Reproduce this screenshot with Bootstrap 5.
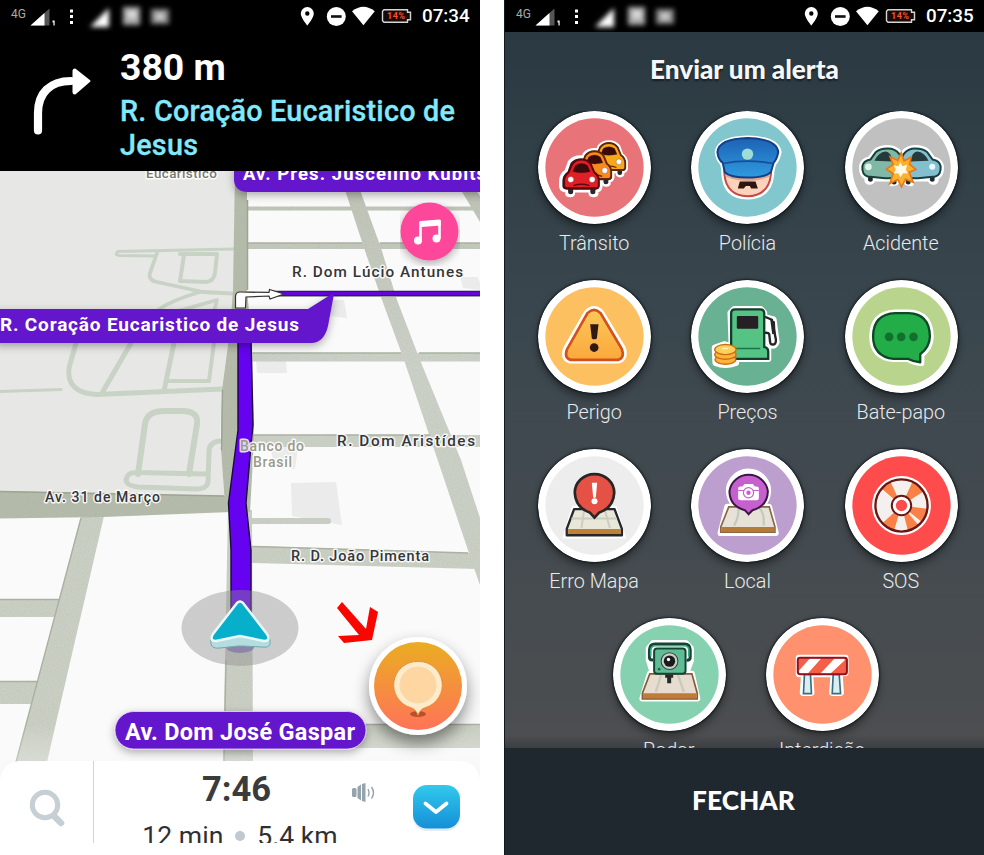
<!DOCTYPE html>
<html lang="pt-BR">
<head>
<meta charset="utf-8">
<meta name="viewport" content="width=device-width, initial-scale=1">
<title>Enviar um alerta</title>
<link href="https://cdn.jsdelivr.net/npm/bootstrap@5.3.0/dist/css/bootstrap.min.css" rel="stylesheet">
<style>
  body { font-family: Roboto, "Liberation Sans", sans-serif; background: #fff; }
  svg { display: block; }
  svg text { font-family: Roboto, "Liberation Sans", sans-serif; }
  .stage { width: 984px; height: 855px; gap: 24px; }
  .phone { width: 480px; }
  .phone-nav { height: 843px; }
  .statusbar { height: 32px; background: #000; }
  .clock { font-size: 18.8px; font-weight: 500; line-height: 33px; width: 58px; }
  .turn { height: 139px; background: #000; }
  .turn-icon { width: 120px; padding: 36px 0 0 33px; }
  .turn-distance { font-size: 37.3px; font-weight: 700; line-height: 40px; padding-top: 15px; }
  .turn-street { font-size: 28.8px; font-weight: 500; line-height: 34px; letter-spacing: .22px; color: #82e9fd; padding-top: 7px; -webkit-text-stroke: .3px #82e9fd; }
  .map { height: 611px; }
  .fab-music { left: 400px; top: 31px; }
  .fab-report { left: 360px; top: 457px; overflow: visible; }
  .eta { height: 82px; background: #fff; border-radius: 20px 20px 0 0; margin-top: -21px; }
  .eta-search { width: 94px; border-right: 1px solid #cdd5d9; padding: 27px 0 0 28px; }
  .eta-info { width: 285px; color: #3b3b3b; }
  .eta-time { font-size: 34.5px; font-weight: 700; line-height: 38px; padding-top: 9px; }
  .eta-left { font-size: 26.6px; line-height: 32px; padding: 12px 0 0 7px; gap: 12px; color: #303030; }
  .eta-dot { width: 10px; height: 10px; background: #c0c9cd; }
  .eta-sound { left: 351px; top: 20px; }
  .phone-alert { background: linear-gradient(#2a3840 0, #2c3b43 60px, #3b474e 330px, #474c50 620px, #4c4e50 735px, #3c3f42 748px); border-left: 1px solid #111a20; }
  .alert-title { height: 79px; font-family: "Lato", sans-serif; font-weight: 900; font-size: 26.1px; line-height: 74px; color: #f6f7f8; text-shadow: 0 2px 2px rgba(0,0,0,.5); }
  .alert-rows { height: 637px; padding-left: 13px; padding-right: 6px; }
  .alert-row { height: 169px; }
  .alert-row-last { padding-right: 4px; }
  .alert-item { width: 153.4px; color: #e8eaeb; font-size: 19.8px; font-weight: 300; }
  .alert-item svg { width: 113px; height: 113px; border-radius: 50%; box-shadow: 0 5px 9px rgba(0,0,0,.42), 0 0 2px 1px rgba(10,20,26,.7); }
  .alert-item span { line-height: 24px; padding-top: 8px; margin-left: -1px; }
  .close-btn { height: 107px; background: #20282f; font-family: "Lato", sans-serif; font-weight: 900; font-size: 26.3px; color: #fff; line-height: 105px; padding-right: 2px; z-index: 1; }
</style>
<script src="https://cdn.jsdelivr.net/npm/bootstrap@5.3.0/dist/js/bootstrap.bundle.min.js"></script>
</head>
<body class="m-0 overflow-hidden">

<svg width="0" height="0" class="position-absolute">
  <defs>
    <filter id="soft" x="-30%" y="-30%" width="160%" height="160%"><feGaussianBlur stdDeviation="2.500"/></filter>
    <linearGradient id="capBlue" x1="0" y1="0" x2="0" y2="1"><stop offset="0" stop-color="#1d62b4"/><stop offset="1" stop-color="#2f9be0"/></linearGradient>
    <linearGradient id="warn" x1="0" y1="0" x2="0" y2="1"><stop offset="0" stop-color="#fbc75a"/><stop offset="1" stop-color="#fba93c"/></linearGradient>
    <symbol id="status-left" viewBox="0 0 200 32">
      <text x="11" y="17.500" font-size="12" fill="#aaa" textLength="15">4G</text>
      <path d="M30.500 25.500 49.500 8.500V25.500z" fill="#555"/>
      <path d="M30.500 25.500 44.500 13V25.500z" fill="#fff"/>
      <path d="M52.500 20.500h2.200v5h-1.300v-3h-.9z" fill="#eee"/>
      <g fill="#fff"><rect x="70" y="9.500" width="3" height="3"/><rect x="70" y="15" width="3" height="3"/><rect x="70" y="21" width="3" height="3"/></g>
      <g filter="url(#soft)" fill="#ddd"><path d="M90 27 109 8v19z" fill="#fff"/><rect x="123" y="7" width="17" height="18" fill="#aaa"/><rect x="151" y="9" width="18" height="15" fill="#888"/><rect x="128" y="11" width="8" height="7" fill="#ddd"/><rect x="156" y="13" width="8" height="7" fill="#ccc"/></g>
    </symbol>
    <symbol id="status-right" viewBox="0 0 114 32">
      <path d="M7.300 7a6.500 6.500 0 0 0-6.500 6.500c0 4.400 6.500 12 6.500 12s6.500-7.600 6.500-12A6.500 6.500 0 0 0 7.300 7zm0 4.300a2.200 2.200 0 1 1 0 4.400 2.200 2.200 0 0 1 0-4.400z" fill="#fff" fill-rule="evenodd"/>
      <circle cx="36.300" cy="16.500" r="9.500" fill="#fff"/><rect x="31" y="15.200" width="10.600" height="2.600" fill="#111"/>
      <path d="M52 11.200Q63.400 2.200 74.800 11.200L63.400 25.300z" fill="#fff"/>
      <path d="M84 9.700h23.500v2.600h3v7.400h-3v2.600H84l-1.500-1.500v-9.600z" fill="#150c0a" stroke="#d5d5d5" stroke-width="1.400"/>
      <text x="87" y="19.300" font-size="9" font-weight="700" fill="#ff4f2c" textLength="18">14%</text>
    </symbol>
  </defs>
</svg>

<main class="stage d-flex">
  <section class="phone phone-nav d-flex flex-column overflow-hidden">
    <div class="statusbar d-flex justify-content-between text-white flex-shrink-0">
      <svg width="200" height="32"><use href="#status-left"/></svg>
      <div class="d-flex"><svg width="114" height="32" class="me-2"><use href="#status-right"/></svg><div class="clock">07:34</div></div>
    </div>
    <div class="turn d-flex text-white flex-shrink-0">
      <div class="turn-icon">
        <svg width="60" height="70" viewBox="0 0 60 70"><path d="M5 62.500V45C5 25 17 13 38 13" fill="none" stroke="#fff" stroke-width="8.200" stroke-linecap="round"/><path d="M42 1.500 56.500 13 42 25.500q-1.500 0-1.500-1.500V3q0-1.500 1.500-1.500z" fill="#fff" stroke="#fff" stroke-width="2" stroke-linejoin="round"/></svg>
      </div>
      <div>
        <div class="turn-distance">380 m</div>
        <div class="turn-street">R. Coração Eucaristico de<br>Jesus</div>
      </div>
    </div>

    <div class="map position-relative flex-shrink-0">
      <svg width="480" height="611" viewBox="0 171 480 611">
        <defs>
          <linearGradient id="road" x1="0" y1="171" x2="0" y2="560" gradientUnits="userSpaceOnUse"><stop offset="0" stop-color="#bec2b5"/><stop offset=".5" stop-color="#cbd1c8"/><stop offset="1" stop-color="#cacfc4"/></linearGradient>
          <linearGradient id="fade" x1="0" y1="0" x2="0" y2="1"><stop offset="0" stop-color="#fff" stop-opacity="0"/><stop offset="1" stop-color="#f2f2f2"/></linearGradient>
          <filter id="lift" x="-10%" y="-40%" width="120%" height="190%"><feDropShadow dx="0" dy="3" stdDeviation="4" flood-opacity=".32"/></filter>
          <filter id="grain" x="0" y="0" width="100%" height="100%"><feTurbulence type="fractalNoise" baseFrequency=".7" numOctaves="2" result="n"/><feColorMatrix in="n" type="matrix" values="0 0 0 0 .35  0 0 0 0 .38  0 0 0 0 .3  .45 0 0 0 -.18" result="m"/><feComposite in="m" in2="SourceGraphic" operator="in" result="g"/><feMerge><feMergeNode in="SourceGraphic"/><feMergeNode in="g"/></feMerge></filter>
        </defs>
        <rect y="171" width="480" height="611" fill="#fafafa"/>
        <!-- buildings -->
        <g fill="#ebebeb"><path d="M460 277h17l3 5v8l-17-2zM333 300l11 0 3 18-18-2zM256 361h30l1 12h-30zM291 483l45-1 6 43-50-9zM270 447h28l-3 22-20-2z"/></g>
        <!-- streets -->
        <g fill="url(#road)" filter="url(#grain)">
          <path d="M243 206.500H480v4H243zM246 243H480v6H246zM246 291H480v6H246zM250 353H480v8.500H250zM252 435H480v12H252z"/>
          <path d="M252 546 470 553 478 569 252 563zM250 518h78a3 3 0 0 1 0 6h-78zM250 724H480v24H250z"/>
          <path d="M345 190h15L381 248 397 300 420 360 461 460 480 518V585L475 571 437 458 404 360 382 300 364 248zM461 190h15l4 6v26z"/>
          <path d="M81 516h23L62 697 47 762H16L38 681zM0 599h62l-5 18H0zM0 681h40l-6 23H0z"/>
          <path d="M228 510 252 510 253 762H223z"/>
        </g>
        <path d="M246 243H362M380 243H480M250 353H401M419 353H480M252 435H430M252 546.500 468 553M0 599.500H60M0 681.500H38M253 724.500H480M226 660 224 762M81 518 16 762" fill="none" stroke="#abb1a1" stroke-width="1.400"/>
        <!-- campus -->
        <path d="M0 171H235V290L228 345 222 390 220 440 225 497 0 491z" fill="#e7e7e5"/>
        <g fill="none" stroke="#c8d3c6" stroke-width="5" stroke-linecap="round" stroke-linejoin="round">
          <path d="M233 249Q180 250 118 251.500Q114 255 119 255.500L155 256" stroke-width="3"/>
          <path d="M157 253 150 273Q148 280 157 282L203 292 232 293.500" stroke-width="3.800"/>
          <path d="M184 255 180 281 206 282Q214 281 215 273L217 254M180 254H216" stroke-width="4"/>
          <path d="M200 292Q172 300 158 310M178 311 217 300 214 312" stroke-width="3.600"/>
          <path d="M0 391.500 61 389.500" stroke-width="3"/>
          <path d="M76 343 69 368Q66 393 97 394.500L222 389M131 343 102 393M174 343 164 391"/>
          <path d="M214 343 209 381H168" stroke-width="4"/>
          <path d="M138 474 145 424Q147 411 164 411H182Q199 411 197 424L189 474" stroke-width="6"/>
          <path d="M220 441Q209 442 209 452L208 482Q207 489 196 489L138 487Q123 485 127 477Q129 472 138 472.500L205 474"/>
        </g>
        <!-- avenue -->
        <g fill="#b5bbaa" filter="url(#grain)"><path d="M235 171H247V290L252 343 254 440 250 512H225L224 490 221 450 222 390 230 330 233 290z"/><path d="M0 491 226 496 231 512 103 517 0 518.500z"/></g>
        <path d="M0 491.500 224 496M247.500 200V290M221.500 450 222.500 390" fill="none" stroke="#9da491" stroke-width="1.500"/>
        <!-- route -->
        <path d="M270 293.500H480" stroke="#221048" stroke-width="5.600"/><path d="M270 293.500H480" stroke="#6207d8" stroke-width="4.200"/>
        <path d="M238 340H251L253 425 251 445 246 503 251 550V612H231V550L228.500 503 238 430z" fill="#6502f0" stroke="#1b0b3a" stroke-width="1.400"/>
        <path d="M235.500 308V296Q236 292 240 292L269 292.500 269.500 289.500 284 294 270 299 269 296 246 297 245.500 308z" fill="#fff" stroke="#333" stroke-width="1.200"/>
        <ellipse cx="240" cy="628" rx="58.500" ry="38" fill="#8c8c8c" fill-opacity=".42"/>
        <ellipse cx="240" cy="647" rx="14" ry="6" fill="#8e84a8"/>
        <path d="M238 602Q240 600 242 602L268 635Q271 640 270 644 269 648 262 647L243 646H238L220 648Q212 649 211 644 210 640 212 636z" fill="#b5dde0" stroke="#73a7ae" stroke-width="1"/>
        <path d="M237 603Q240 600 243 603L267 634Q271 641 264 641L240 636 216 641Q209 641 213 634z" fill="#08afca" stroke="#eafafa" stroke-width="2.500" stroke-linejoin="round"/>
        <rect y="725" width="480" height="57" fill="url(#fade)" opacity=".5"/>
        <!-- street labels -->
        <g font-weight="500" font-size="15.300" fill="#34363a" stroke="#fff" stroke-opacity=".85" stroke-width="3" stroke-linejoin="round" paint-order="stroke">
          <text x="146" y="178" font-size="13.500" fill="#77796f" textLength="71">Eucaristico</text>
          <text x="292" y="276.500" textLength="171">R. Dom Lúcio Antunes</text>
          <text x="337" y="446" textLength="138">R. Dom Aristídes</text>
          <text x="291" y="561" font-size="14.500" textLength="138">R. D. João Pimenta</text>
          <text x="45" y="502" font-size="14" textLength="115">Av. 31 de Março</text>
          <g fill="#999a88" font-size="14"><text x="240" y="450.500" textLength="64">Banco do</text><text x="253" y="467" textLength="39">Brasil</text></g>
        </g>
        <!-- callouts -->
        <path filter="url(#lift)" d="M234 165V180Q235 192 248 192H490V165z" fill="#6415cc"/>
        <text x="243" y="180" fill="#fff" font-weight="700" font-size="18.500" textLength="243">Av. Pres. Juscelino Kubits</text>
        <path filter="url(#lift)" d="M-5 309H308L327 297Q330 294 334 294L328 326Q324 343 311 343H-5z" fill="#6415cc"/>
        <text x="0" y="331" fill="#fff" font-weight="700" font-size="19" textLength="299">R. Coração Eucaristico de Jesus</text>
        <rect filter="url(#lift)" x="115" y="711.500" width="251" height="37.500" rx="18.700" fill="#6415cc" stroke="#e9dcfb" stroke-width=".8"/>
        <text x="125" y="740" fill="#fff" font-weight="700" font-size="23.500" textLength="230">Av. Dom José Gaspar</text>
        <path d="M342 602 366 629 370 607 378 612 372 640 344 643 338 636 359 635 337 608z" fill="#f80600"/>
      </svg>
      <svg class="fab-music position-absolute" width="60" height="64" viewBox="0 0 60 64">
        <circle cx="29.500" cy="29.500" r="29" fill="#fd469b" filter="url(#lift)"/>
        <path d="M20.500 20.500V38.500M39.500 18.500V36.500" fill="none" stroke="#fff" stroke-width="2.600"/><path d="M19.200 20.500Q19.200 19.300 20.500 19L39.500 17.500Q40.800 17.500 40.800 19V23.500L21.500 25z" fill="#fff"/><circle cx="18" cy="38.500" r="4" fill="#fff"/><circle cx="36.500" cy="36.500" r="4" fill="#fff"/>
      </svg>
      <svg class="fab-report position-absolute" width="120" height="134" viewBox="360 628 120 134">
        <defs><linearGradient id="fab" x1="0" y1="0" x2="0" y2="1"><stop offset="0" stop-color="#eaad22"/><stop offset="1" stop-color="#ff7358"/></linearGradient>
        <filter id="fabShadow" x="-50%" y="-50%" width="200%" height="220%"><feDropShadow dx="0" dy="8" stdDeviation="8" flood-opacity=".45"/></filter></defs>
        <circle cx="418" cy="686" r="49" fill="#fff" filter="url(#fabShadow)"/>
        <circle cx="418" cy="686" r="44" fill="url(#fab)"/>
        <ellipse cx="418" cy="714" rx="8" ry="3" fill="#b9502c"/>
        <path d="M418 661.500a23.500 23.500 0 0 1 7.500 46Q420 709 418 715.500 416 709 410.500 707.500a23.500 23.500 0 0 1 7.500-46z" fill="#ffebc9" stroke="#d98a2c" stroke-width=".8"/>
        <circle cx="418" cy="685" r="18" fill="#fdd6a1" stroke="#f5dab0"/>
      </svg>
    </div>

    <div class="eta d-flex position-relative flex-shrink-0">
      <div class="eta-search"><svg width="38" height="42" viewBox="0 0 38 42"><path d="M26 28 33 35" stroke="#c5cfd4" stroke-width="6.500" stroke-linecap="round"/><circle cx="17" cy="17" r="12.700" fill="#fff" stroke="#c5cfd4" stroke-width="5"/></svg></div>
      <div class="eta-info text-center">
        <div class="eta-time">7:46</div>
        <div class="eta-left d-flex justify-content-center align-items-center"><span>12 min</span><span class="eta-dot rounded-circle"></span><span>5.4 km</span></div>
      </div>
      <svg width="101" height="82" viewBox="379 761 101 82">
        <defs><linearGradient id="sky" x1="0" y1="0" x2="0" y2="1"><stop offset="0" stop-color="#32c9ec"/><stop offset="1" stop-color="#158fd8"/></linearGradient></defs>
        <rect x="413" y="787" width="47" height="44" rx="14" fill="#e3ecf1"/><rect x="413" y="785" width="47" height="43.500" rx="14" fill="url(#sky)"/>
        <path d="M425.500 803.500 436 812 446.500 803.500" fill="none" stroke="#fff" stroke-width="3.800" stroke-linecap="round" stroke-linejoin="round"/>
      </svg>
      <svg class="eta-sound position-absolute" width="25" height="22" viewBox="0 0 25 22"><g fill="#94a4ac"><rect x="1" y="7" width="4.500" height="9" rx="1.500"/><path d="M6.500 6 10 3.500V19.500L6.500 17zM11 3 14.500 2V21L11 20z"/></g><path d="M17 8q2 4 0 7.500M20.500 6q4 6 0 11.500" fill="none" stroke="#94a4ac" stroke-width="1.400"/></svg>
    </div>
  </section>

  <section class="phone phone-alert d-flex flex-column overflow-hidden">
    <div class="statusbar d-flex justify-content-between text-white flex-shrink-0">
      <svg width="200" height="32"><use href="#status-left"/></svg>
      <div class="d-flex"><svg width="114" height="32" class="me-2"><use href="#status-right"/></svg><div class="clock">07:35</div></div>
    </div>
    <div class="alert-title text-center flex-shrink-0">Enviar um alerta</div>
    <div class="alert-rows overflow-hidden flex-shrink-0">
      <div class="alert-row d-flex">
        <div class="alert-item d-flex flex-column align-items-center">
          <svg viewBox="40 35 338 338"><circle cx="209" cy="204" r="169" fill="#fff"/><circle cx="209" cy="204" r="147" fill="#e8747a"/>
            <defs>
              <path id="carShape" d="M-32-52Q-20-66 0-66 20-66 32-52L42-24Q58-14 58 4V22Q56 32 46 32V40Q46 46 38 46 30 46 30 40V32H-24V40Q-24 46-32 46-40 46-40 40V32Q-56 32-58 22V4Q-58-14-42-24z"/>
              <g id="carFace"><path d="M-28-46Q-18-60 0-60 18-60 28-46L38-22Q52-12 52 4V18Q52 26 44 26H-44Q-52 26-52 18V4Q-52-12-38-22z" stroke-width="6"/><path d="M-26-24-18-42Q-10-48 0-48 10-48 18-42L26-24Q0-17-26-24z" fill="#3a0a0c"/><circle cx="-32" r="9" fill="#fff"/><circle cx="32" r="9" fill="#fff"/><path d="M-24 18Q0 10 24 18" fill="none" stroke-width="4"/></g>
            </defs>
            <g fill="#fff" stroke="#fff" stroke-width="14" stroke-linejoin="round"><use href="#carShape" transform="translate(252 187) scale(.88)"/><use href="#carShape" transform="translate(209 213) scale(.92)"/><use href="#carShape" x="168" y="240"/></g>
            <g fill="#26282c"><use href="#carShape" transform="translate(252 187) scale(.86)"/><use href="#carShape" transform="translate(209 213) scale(.9)"/><use href="#carShape" transform="translate(168 240) scale(.95)"/></g>
            <use href="#carFace" fill="#f7a81b" stroke="#5a2a07" transform="translate(252 187) scale(.94)"/><use href="#carFace" fill="#f78a1d" stroke="#642206" transform="translate(209 213) scale(.96)"/><use href="#carFace" fill="#e01f26" stroke="#5f060b" x="170" y="240"/>
          </svg><span>Trânsito</span>
        </div>
        <div class="alert-item d-flex flex-column align-items-center">
          <svg viewBox="499 35 338 338"><circle cx="668" cy="204" r="169" fill="#fff"/><circle cx="668" cy="204" r="147" fill="#82c7ce"/>
            <path d="M598 190V225Q602 290 668 292 734 290 740 225V190z" fill="#fbd0b4" stroke="#fff" stroke-width="16"/><path d="M578 158Q582 118 668 116 756 118 762 158 758 180 746 192L738 222Q668 244 600 222L594 192Q580 180 578 158z" stroke="#fff" stroke-width="16" fill="#fff"/>
            <path d="M599 190V225Q605 288 668 290 732 288 738 225V190z" fill="#fcd3ba" stroke="#c34a48" stroke-width="6"/>
            <path d="M604 232Q668 258 734 232L730 220H606z" fill="#e0a690"/>
            <path d="M578 158Q582 118 668 116 756 118 760 158 756 180 746 190L738 218Q720 234 668 234 616 234 600 218L594 190Q580 180 578 158z" fill="url(#capBlue)" stroke="#123f86" stroke-width="6"/>
            <path d="M594 192Q668 178 744 192" fill="none" stroke="#174e97" stroke-width="5"/><circle cx="668" cy="164" r="17" fill="#9fdcd5"/>
            <path d="M645 246H692L699 267H679L675 259H663L657 267H639z" fill="#2b1711"/>
          </svg><span>Polícia</span>
        </div>
        <div class="alert-item d-flex flex-column align-items-center">
          <svg viewBox="960 35 338 338"><circle cx="1129" cy="204" r="169" fill="#fff"/><circle cx="1129" cy="204" r="147" fill="#c0c0c0"/>
            <defs><path id="sideCar" d="M1012 200Q1015 184 1036 180L1052 158Q1064 147 1088 147 1110 147 1122 163L1136 190V226Q1130 236 1115 236V244Q1112 250 1102 250V236H1042V240Q1035 250 1028 243V232Q1010 226 1012 200z" stroke-linejoin="round"/></defs>
            <g fill="#fff" stroke="#fff" stroke-width="20"><use href="#sideCar"/><use href="#sideCar" transform="translate(2258 0) scale(-1 1)"/></g>
            <path d="M1029 230h14v13q-7 7-14 0zM1214 230h14v13q-7 7-14 0zM1100 238h14v13q-7 7-14 0zM1142 238h14v13q-7 7-14 0z" fill="#22282b"/>
            <path d="M1012 200Q1015 184 1036 180L1052 158Q1064 147 1088 147 1110 147 1122 163L1136 190V226Q1115 238 1080 236L1028 231Q1010 226 1012 200z" fill="#7fb8a6" stroke="#163f38" stroke-width="6"/>
            <path d="M1246 200Q1243 184 1222 180L1206 158Q1194 147 1170 147 1148 147 1136 163L1122 190V226Q1143 238 1178 236L1230 231Q1248 226 1246 200z" fill="#84bfd0" stroke="#163f45" stroke-width="6"/>
            <path d="M1048 184Q1060 158 1082 156 1096 156 1104 186zM1210 184Q1198 158 1176 156 1162 156 1154 186z" fill="#243a3c"/><circle cx="1030" cy="202" r="10" fill="#dff5ea"/><circle cx="1221" cy="202" r="9" fill="#e5fbff"/>
            <path d="M1128 160 1137 184 1158 173 1153 194 1172 210 1152 218 1164 248 1141 239 1129 262 1118 240 1094 252 1104 222 1084 209 1104 195 1095 172 1118 183z" fill="#f8b22f" stroke="#e87817" stroke-width="5"/><path d="M1126 188 1132 200 1146 196 1142 210 1148 222 1134 221 1126 233 1119 221 1106 222 1112 209 1106 198 1119 200z" fill="#fff8e4"/>
          </svg><span>Acidente</span>
        </div>
      </div>

      <div class="alert-row d-flex">
        <div class="alert-item d-flex flex-column align-items-center">
          <svg viewBox="40 30 338 338"><circle cx="209" cy="199" r="169" fill="#fff"/><circle cx="209" cy="199" r="147" fill="#fdc061"/>
            <path d="M186 128Q208 106 229 128L293 233Q304 264 280 271H136Q114 264 124 236z" fill="#fff" stroke="#fff" stroke-width="18"/>
            <path d="M188 129Q208 110 227 129L290 235Q301 263 279 269H138Q117 263 127 237z" fill="url(#warn)" stroke="#d4501c" stroke-width="8"/>
            <path d="M196 162H221L216 205Q208 210 201 205z" fill="#301913"/><circle cx="208" cy="232" r="13" fill="#301913"/>
          </svg><span>Perigo</span>
        </div>
        <div class="alert-item d-flex flex-column align-items-center">
          <svg viewBox="499 30 338 338"><circle cx="668" cy="199" r="169" fill="#fff"/><circle cx="668" cy="199" r="147" fill="#69b193"/>
            <path d="M718 140 746 148 755 216Q750 230 738 225L728 192H718V228L730 236V266H622L617 128 628 117H708L718 128zM570 232 600 222 634 235V278Q600 290 572 278z" fill="#fff" stroke="#fff" stroke-width="18" stroke-linejoin="round"/>
            <path d="M720 140 741 149 753 208Q754 224 742 223 735 222 735 210L733 192Q731 187 720 188" fill="none" stroke="#242427" stroke-width="7" stroke-linejoin="round"/><path d="M736 148 750 154 752 190 742 192z" fill="#242427"/>
            <path d="M619 240V130Q619 118 631 118H706Q718 118 718 130V230Q730 232 730 244V266H619z" fill="#55c384" stroke="#123d2c" stroke-width="7"/><path d="M622 235H706" stroke="#1b754c" stroke-width="4"/><rect x="636" y="138" width="64" height="38" rx="3" fill="#242023"/>
            <g fill="#fbb43b" stroke="#c96f14" stroke-width="4"><ellipse cx="602" cy="268" rx="31" ry="14"/><ellipse cx="602" cy="253" rx="32" ry="14"/><ellipse cx="602" cy="238" rx="32" ry="15" fill="#ffcf5d"/></g><path d="M592 235h18" stroke="#fff3b2" stroke-width="5"/>
          </svg><span>Preços</span>
        </div>
        <div class="alert-item d-flex flex-column align-items-center">
          <svg viewBox="960 30 338 338"><circle cx="1129" cy="199" r="169" fill="#fff"/><circle cx="1129" cy="199" r="147" fill="#b8d48d"/>
            <path d="M1110 128H1150Q1215 130 1216 200 1215 232 1188 254V278Q1164 276 1148 266H1105Q1042 260 1042 198 1043 132 1110 128z" fill="#fff" stroke="#fff" stroke-width="19" stroke-linejoin="round"/>
            <path d="M1110 129H1150Q1213 131 1214 199 1213 231 1185 252V276Q1164 274 1150 266H1105Q1044 258 1044 198 1045 132 1110 129z" fill="#23ad48" stroke="#0b4a24" stroke-width="7" stroke-linejoin="round"/><g fill="#11702e"><circle cx="1092" cy="200" r="13"/><circle cx="1128" cy="200" r="13"/><circle cx="1165" cy="200" r="13"/></g>
          </svg><span>Bate-papo</span>
        </div>
      </div>

      <div class="alert-row d-flex">
        <div class="alert-item d-flex flex-column align-items-center">
          <svg viewBox="40 27 338 338"><circle cx="209" cy="196" r="169" fill="#fff"/><circle cx="209" cy="196" r="147" fill="#ededed"/>
            <path d="M148 206H268L292 286H125z" fill="#e9e6da" stroke="#fff" stroke-width="18"/><path d="M148 207H269L291 266V285H126V266z" fill="#e9e6da" stroke="#252729" stroke-width="7" stroke-linejoin="round"/><path d="M178 210 170 263M240 210 255 263M140 235H275" stroke="#cbcdc0" stroke-width="6"/><path d="M130 266H288V281H130z" fill="#c08035"/>
            <path d="M209 232 196 218Q152 202 150 158A59 56 0 0 1 268 158Q266 202 222 218z" fill="#e55245" stroke="#282524" stroke-width="8"/><path d="M201 128H217L213 171Q209 175 205 171z" fill="#fff"/><circle cx="209" cy="183" r="9" fill="#fff"/>
          </svg><span>Erro Mapa</span>
        </div>
        <div class="alert-item d-flex flex-column align-items-center">
          <svg viewBox="499 27 338 338"><circle cx="668" cy="196" r="169" fill="#fff"/><circle cx="668" cy="196" r="147" fill="#bc9fce"/>
            <path d="M608 200H732L752 278H588zM672 218 646 205A58 58 0 1 1 696 205z" fill="#fff" stroke="#fff" stroke-width="19" stroke-linejoin="round"/>
            <path d="M612 200H733L750 260V276H588V260z" fill="#e6e2d8" stroke="#8a6542" stroke-width="5"/><path d="M640 202Q644 228 628 256M702 202Q720 220 716 256" stroke="#c9c8bf" stroke-width="7" fill="none"/><path d="M590 260H749V275H590z" fill="#b67a37"/>
            <path d="M671 222 660 210Q614 198 614 153A58 56 0 0 1 729 153Q728 198 683 210z" fill="#c560ce" stroke="#3c1645" stroke-width="6"/>
            <path d="M640 146V144Q640 139 647 139H653L659 132H684L690 139H694Q702 139 702 146V174Q702 180 695 180H647Q640 180 640 174z" fill="#fff"/><path d="M640 151H702" stroke="#c560ce" stroke-width="3"/><circle cx="671" cy="158" r="17" fill="#c560ce"/><circle cx="671" cy="158" r="10" fill="none" stroke="#fff" stroke-width="7"/>
          </svg><span>Local</span>
        </div>
        <div class="alert-item d-flex flex-column align-items-center">
          <svg viewBox="960 27 338 338"><circle cx="1129" cy="196" r="169" fill="#fff"/><circle cx="1129" cy="196" r="147" fill="#fe4c4c"/>
            <circle cx="1129" cy="196" r="88" fill="#fff"/><circle cx="1129" cy="196" r="80" fill="#f4f0ed"/>
            <g fill="#f98148"><path d="M1129 196 1070 146A78 78 0 0 1 1096 125zM1129 196 1162 125A78 78 0 0 1 1195 154zM1129 196 1206 208A78 78 0 0 1 1183 252zM1129 196 1107 270A78 78 0 0 1 1071 248zM1129 196 1180 255A78 78 0 0 1 1148 271zM1129 196 1074 251A78 78 0 0 1 1052 206z"/></g>
            <path d="M1129 196 1207 190A78 78 0 0 1 1182 253zM1129 196 1051 190A78 78 0 0 0 1072 249z" fill="#f4f0ed"/><path d="M1129 196 1206 206A78 78 0 0 1 1190 245z" fill="#f98148"/>
            <circle cx="1129" cy="196" r="78" fill="none" stroke="#681713" stroke-width="7"/><circle cx="1129" cy="196" r="29" fill="#fff" stroke="#681713" stroke-width="6"/><circle cx="1129" cy="196" r="17" fill="#fe4c4c"/>
          </svg><span>SOS</span>
        </div>
      </div>

      <div class="alert-row alert-row-last d-flex justify-content-center">
        <div class="alert-item d-flex flex-column align-items-center">
          <svg viewBox="70 39 338 338"><circle cx="239" cy="208" r="169" fill="#fff"/><circle cx="239" cy="208" r="147" fill="#86d2b0"/>
            <path d="M180 206H306L322 280H158zM190 114H288L303 130V166L288 206H190L177 164V130z" fill="#fff" stroke="#fff" stroke-width="18" stroke-linejoin="round"/>
            <path d="M180 206H306L322 264V281H158V264z" fill="#e6dcd0" stroke="#8a5a36" stroke-width="5"/><path d="M214 208Q206 238 198 260M264 208 282 260" fill="none" stroke="#cdc9bd" stroke-width="7"/><path d="M160 264H320V280H160z" fill="#be7c37"/>
            <path d="M190 164Q178 166 179 154V134Q180 117 196 117H284Q300 117 301 134V154Q302 166 290 165" fill="none" stroke="#134535" stroke-width="9"/><path d="M183 154V136Q184 122 197 122H283Q297 122 297 136V154" fill="none" stroke="#39aa7f" stroke-width="5"/>
            <rect x="193" y="130" width="94" height="76" rx="9" fill="#60bc95" stroke="#134535" stroke-width="6"/><circle cx="239" cy="168" r="25" fill="#cad0c9" stroke="#374642" stroke-width="3"/><circle cx="239" cy="168" r="17" fill="#191c1c"/><circle cx="236" cy="163" r="5" fill="#fff"/><circle cx="208" cy="192" r="4" fill="#18684d"/><path d="M226 208H250V218H244V234H232V218H226z" fill="#252927"/>
          </svg><span>Radar</span>
        </div>
        <div class="alert-item d-flex flex-column align-items-center">
          <svg viewBox="529 39 338 338"><circle cx="698" cy="208" r="169" fill="#fff"/><circle cx="698" cy="208" r="147" fill="#ff916e"/>
            <path d="M628 159H766V203H748L752 262H728L732 206H660L664 262H640L644 206H628z" fill="#fff" stroke="#fff" stroke-width="20" stroke-linejoin="round"/>
            <path d="M644 208 641 265H665L662 208zM730 208 727 265H752L748 208z" fill="#d9eef2" stroke="#3b6c80" stroke-width="5"/>
            <rect x="624" y="158" width="147" height="49" rx="6" fill="#f46047"/><path d="M660 160H694L654 205H628V196zM734 160H764V166L722 205H692z" fill="#fff"/><rect x="624" y="158" width="147" height="49" rx="7" fill="none" stroke="#94101c" stroke-width="6"/>
          </svg><span>Interdição</span>
        </div>
      </div>
    </div>
    <div class="close-btn text-center flex-shrink-0">FECHAR</div>
  </section>
</main>
</body>
</html>
